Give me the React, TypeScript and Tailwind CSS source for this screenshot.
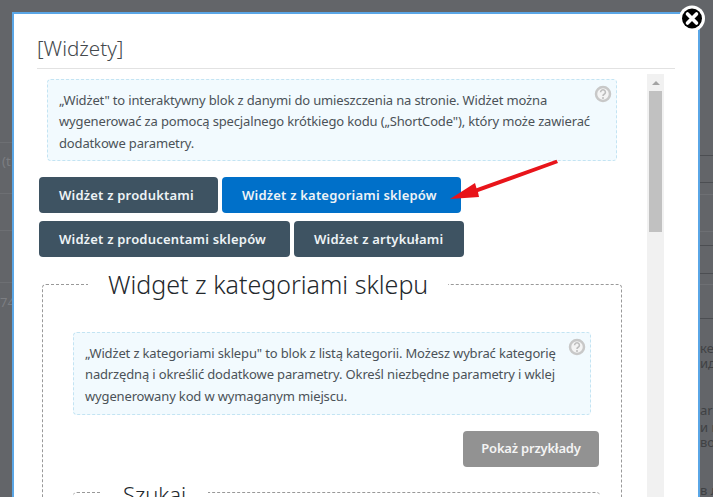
import React from 'react';

const font = "font-['Noto_Sans',sans-serif]";

const HelpIcon = () => (
  <svg width="18" height="18" viewBox="0 0 18 18" className="absolute top-[5px] right-[4px]">
    <circle cx="9" cy="9" r="7" fill="#f4f4f4" stroke="#c8c8c8" strokeWidth="2.5" />
    <path d="M6.6 7.2a2.4 2.4 0 1 1 3.6 2.1c-.8.5-1.2.9-1.2 1.7" fill="none" stroke="#bdbdbd" strokeWidth="1.6" />
    <circle cx="9" cy="13" r="1" fill="#bdbdbd" />
  </svg>
);

const InfoBox = ({ className, lines }: { className: string; lines: string[] }) => (
  <div className={`relative rounded border border-dashed border-[#c3e4f3] bg-[#f2fafe] pl-[11px] pt-[10px] text-[13px] leading-[21.4px] tracking-[-0.15px] text-[#4b5258] whitespace-nowrap ${className}`}>
    {lines.map(line => (
      <div key={line}>{line}</div>
    ))}
    <HelpIcon />
  </div>
);

const TabButton = ({ label, className }: { label: string; className: string }) => (
  <button className={`h-9 rounded pl-5 pt-px text-left text-[13px] font-semibold tracking-[0.2px] text-[#eef3f6] ${className}`}>{label}</button>
);

const BgText = ({ className, children }: { className: string; children: string }) => (
  <div className={`text-[13px] leading-[15px] whitespace-nowrap ${className}`}>{children}</div>
);

const App = () => {
  return (
    <div className={`relative h-[497px] w-[713px] overflow-hidden bg-[#636569] ${font}`}>
      {/* Page behind the overlay */}
      <div className="flex h-full justify-between">
        <div className="w-3 overflow-hidden">
          <div className="h-[143px] border-b border-[#6d6f73]" />
          <BgText className="mt-[11px] pl-[2px] text-[#7c7e82]">(t</BgText>
          <div className="h-[25px] border-b border-[#6d6f73]" />
          <div className="h-[37px] border-b border-[#6d6f73]" />
          <div className="h-[52px] border-b border-[#6d6f73]" />
          <BgText className="mt-[12px] text-[#7c7e82]">74</BgText>
        </div>
        <div className="w-[13px] overflow-hidden">
          <div className="h-[156px] border-b border-[#4c4e52]" />
          <div className="h-[27px] border-b border-[#4c4e52]" />
          <div className="h-3 border-b border-[#6d6f73]" />
          <div className="h-[37px] border-b border-[#6d6f73]" />
          <div className="h-[14px] border-b border-[#4c4e52]" />
          <div className="h-[28px] border-b border-[#4c4e52]" />
          <div className="h-[11px] border-b border-[#6d6f73]" />
          <div className="h-[34px] border-b border-[#4c4e52]" />
          <BgText className="mt-[22px] text-[#3f4144]">кек</BgText>
          <BgText className="text-[#3f4144]">ид</BgText>
          <BgText className="mt-[32px] text-[#3f4144]">ar</BgText>
          <BgText className="mt-[2px] text-[#3f4144]">и в</BgText>
          <BgText className="text-[#3f4144]">вой</BgText>
          <BgText className="mt-[33px] text-[#3f4144]">в л</BgText>
        </div>
      </div>

      {/* Modal */}
      <div className="absolute left-3 top-3 h-[600px] w-[688px] border-2 border-[#5aa6e6] bg-white px-[23px]">
        <div className="h-[55px] border-b border-[#e2e2e2] pt-5 text-[20.6px] font-light leading-[28px] text-[#44494d]">[Widżety]</div>

        <div className="mt-[5px] flex w-[627px]">
          <div className="w-[610px]">
            <InfoBox
              className="ml-[10px] mt-[5px] h-[82px] w-[570px]"
              lines={[
                '„Widżet" to interaktywny blok z danymi do umieszczenia na stronie. Widżet można',
                'wygenerować za pomocą specjalnego krótkiego kodu („ShortCode"), który może zawierać',
                'dodatkowe parametry.',
              ]}
            />

            <div className="ml-[2px] mt-4 flex flex-col gap-2">
              <div className="flex gap-1">
                <TabButton label="Widżet z produktami" className="w-[179px] bg-[#3e5362]" />
                <TabButton label="Widżet z kategoriami sklepów" className="w-[239px] bg-[#0070c9]" />
              </div>
              <div className="flex gap-1">
                <TabButton label="Widżet z producentami sklepów" className="w-[251px] bg-[#3e5362]" />
                <TabButton label="Widżet z artykułami" className="w-[170px] bg-[#3e5362]" />
              </div>
            </div>

            <fieldset className="ml-[5px] mt-[13px] h-[300px] w-[580px] rounded border border-dashed border-[#999] pl-[30px]">
              <legend className="ml-[15px] px-5 text-[25px] font-light leading-[28px] text-[#23282c]">Widget z kategoriami sklepu</legend>
              <InfoBox
                className="mt-[34px] h-[83px] w-[518px]"
                lines={[
                  '„Widżet z kategoriami sklepu" to blok z listą kategorii. Możesz wybrać kategorię',
                  'nadrzędną i określić dodatkowe parametry. Określ niezbędne parametry i wklej',
                  'wygenerowany kod w wymaganym miejscu.',
                ]}
              />
              <div className="mt-4 flex w-[526px] justify-end">
                <button className="h-9 w-[136px] rounded bg-[#929292] text-[13px] font-semibold tracking-[-0.2px] text-[#f4f4f4]">Pokaż przykłady</button>
              </div>
              <fieldset className="mt-[10px] h-[60px] w-[527px] rounded border-t border-dashed border-[#999]">
                <legend className="ml-[28px] px-[22px] pt-[3px] text-[22px] font-light leading-[28px] text-[#23282c]">Szukaj</legend>
              </fieldset>
            </fieldset>
          </div>

          {/* Scrollbar */}
          <div className="flex h-[600px] w-[17px] flex-col items-center bg-[#f1f1f1] pt-[7px]">
            <div className="h-0 w-0 border-x-4 border-b-4 border-x-transparent border-b-[#a3a3a3]" />
            <div className="mt-[6px] h-[141px] w-[13px] bg-[#c1c1c1]" />
          </div>
        </div>
      </div>

      {/* Annotation arrow */}
      <svg className="absolute left-[445px] top-[155px]" width="118" height="50" viewBox="445 155 118 50">
        <path d="M450 199L475 183L476.500 188.300L556.500 159.800L558 163L478 192L479 197Z" fill="#e8141a" />
      </svg>

      {/* Close button */}
      <svg className="absolute left-[678px] top-[5px]" width="28" height="28" viewBox="0 0 28 28">
        <circle cx="14" cy="13.500" r="13" fill="#fff" />
        <circle cx="14" cy="13.500" r="10" fill="#000" />
        <path d="M9.500 9l9 9M18.500 9l-9 9" stroke="#fff" strokeWidth="3.600" strokeLinecap="round" />
      </svg>
    </div>
  );
};

export default App;
